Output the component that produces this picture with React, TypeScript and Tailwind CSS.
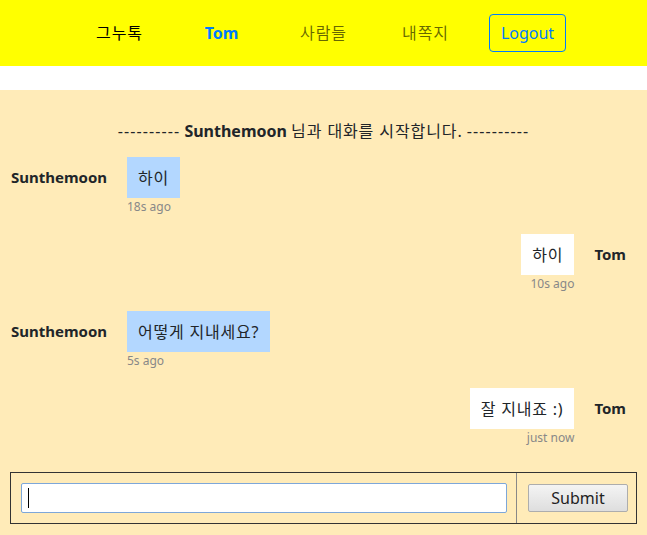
import { useState } from 'react';

type Msg = {
  id: number;
  from: string;
  text: string;
  time: string;
  mine: boolean;
};

const messages: Msg[] = [
  { id: 1, from: 'Sunthemoon', text: '하이', time: '18s ago', mine: false },
  { id: 2, from: 'Tom', text: '하이', time: '10s ago', mine: true },
  { id: 3, from: 'Sunthemoon', text: '어떻게 지내세요?', time: '5s ago', mine: false },
  { id: 4, from: 'Tom', text: '잘 지내죠 :)', time: 'just now', mine: true },
];

const font = "font-['Noto_Sans','Noto_Sans_CJK_KR',sans-serif]";

const NavBar = () => (
  <nav className="h-[66px] bg-[#ffff00] flex justify-center items-center text-[16px]">
    <div className="w-[102px] text-center text-black tracking-[1px]">그누톡</div>
    <div className="w-[102px] text-center font-bold text-[#007bff]">Tom</div>
    <div className="w-[102px] text-center text-black/60 tracking-[1px]">사람들</div>
    <div className="w-[102px] text-center text-black/60 tracking-[1px]">내쪽지</div>
    <div className="w-[102px] flex justify-center">
      <button className="h-[38px] px-[11px] border border-[#007bff] rounded-[4px] text-[#007bff] leading-[24px]">
        Logout
      </button>
    </div>
  </nav>
);

const MessageRow = ({ msg }: { msg: Msg }) => {
  if (msg.mine) {
    return (
      <div className="flex justify-end items-start">
        <div className="flex flex-col items-end">
          <div className="bg-white px-[11px] h-[41px] flex items-center text-[16px] tracking-[0.8px]">{msg.text}</div>
          <div className="text-[12px] leading-[18px] text-[#888]">{msg.time}</div>
        </div>
        <div className="h-[41px] flex items-center pl-[20px] pr-[21px] font-bold text-[15px]">{msg.from}</div>
      </div>
    );
  }
  return (
    <div className="flex items-start">
      <div className="w-[127px] pl-[11px] h-[41px] flex items-center font-bold text-[15px]">{msg.from}</div>
      <div className="flex flex-col items-start">
        <div className="bg-[#b3d7ff] px-[11px] h-[41px] flex items-center text-[16px] tracking-[0.8px]">{msg.text}</div>
        <div className="text-[12px] leading-[18px] text-[#888]">{msg.time}</div>
      </div>
    </div>
  );
};

export default function App() {
  const [text, setText] = useState('');

  return (
    <div className={`${font} w-[647px] h-[535px] overflow-hidden bg-white text-[#212529]`}>
      <NavBar />
      <div className="mt-[24px] bg-[#ffebb8] h-[445px] pt-[29px]">
        <div className="text-center text-[16px] leading-[24px]">
          <span className="tracking-[1.1px]">----------</span>{' '}
          <span className="font-bold">Sunthemoon</span>{' '}
          <span className="tracking-[0.9px]">님과 대화를 시작합니다.</span>{' '}
          <span className="tracking-[1.1px]">----------</span>
        </div>
        <div className="mt-[14px] flex flex-col gap-[18px]">
          {messages.map((m) => (
            <MessageRow key={m.id} msg={m} />
          ))}
        </div>
        <form
          className="mt-[25px] mx-[10px] flex border border-[#333]"
          onSubmit={(e) => e.preventDefault()}
        >
          <div className="flex-1 py-[10px] pl-[10px] pr-[9px] border-r border-[#888]">
            <div className="relative">
              <input
                autoFocus
                value={text}
                onChange={(e) => setText(e.target.value)}
                className="w-full h-[30px] bg-white border border-[#7da7d9] rounded-[2px] px-[6px] outline-none text-[16px] caret-transparent"
              />
              {text === '' && (
                <span className="absolute left-[7px] top-[5px] w-[1px] h-[20px] bg-black pointer-events-none" />
              )}
            </div>
          </div>
          <div className="w-[119px] flex items-center pl-[11px]">
            <button
              type="submit"
              className="w-[100px] h-[28px] border border-[#adadad] rounded-[2px] bg-gradient-to-b from-[#f4f4f4] to-[#dedede] text-[16px] text-[#222]"
            >
              Submit
            </button>
          </div>
        </form>
      </div>
    </div>
  );
}
